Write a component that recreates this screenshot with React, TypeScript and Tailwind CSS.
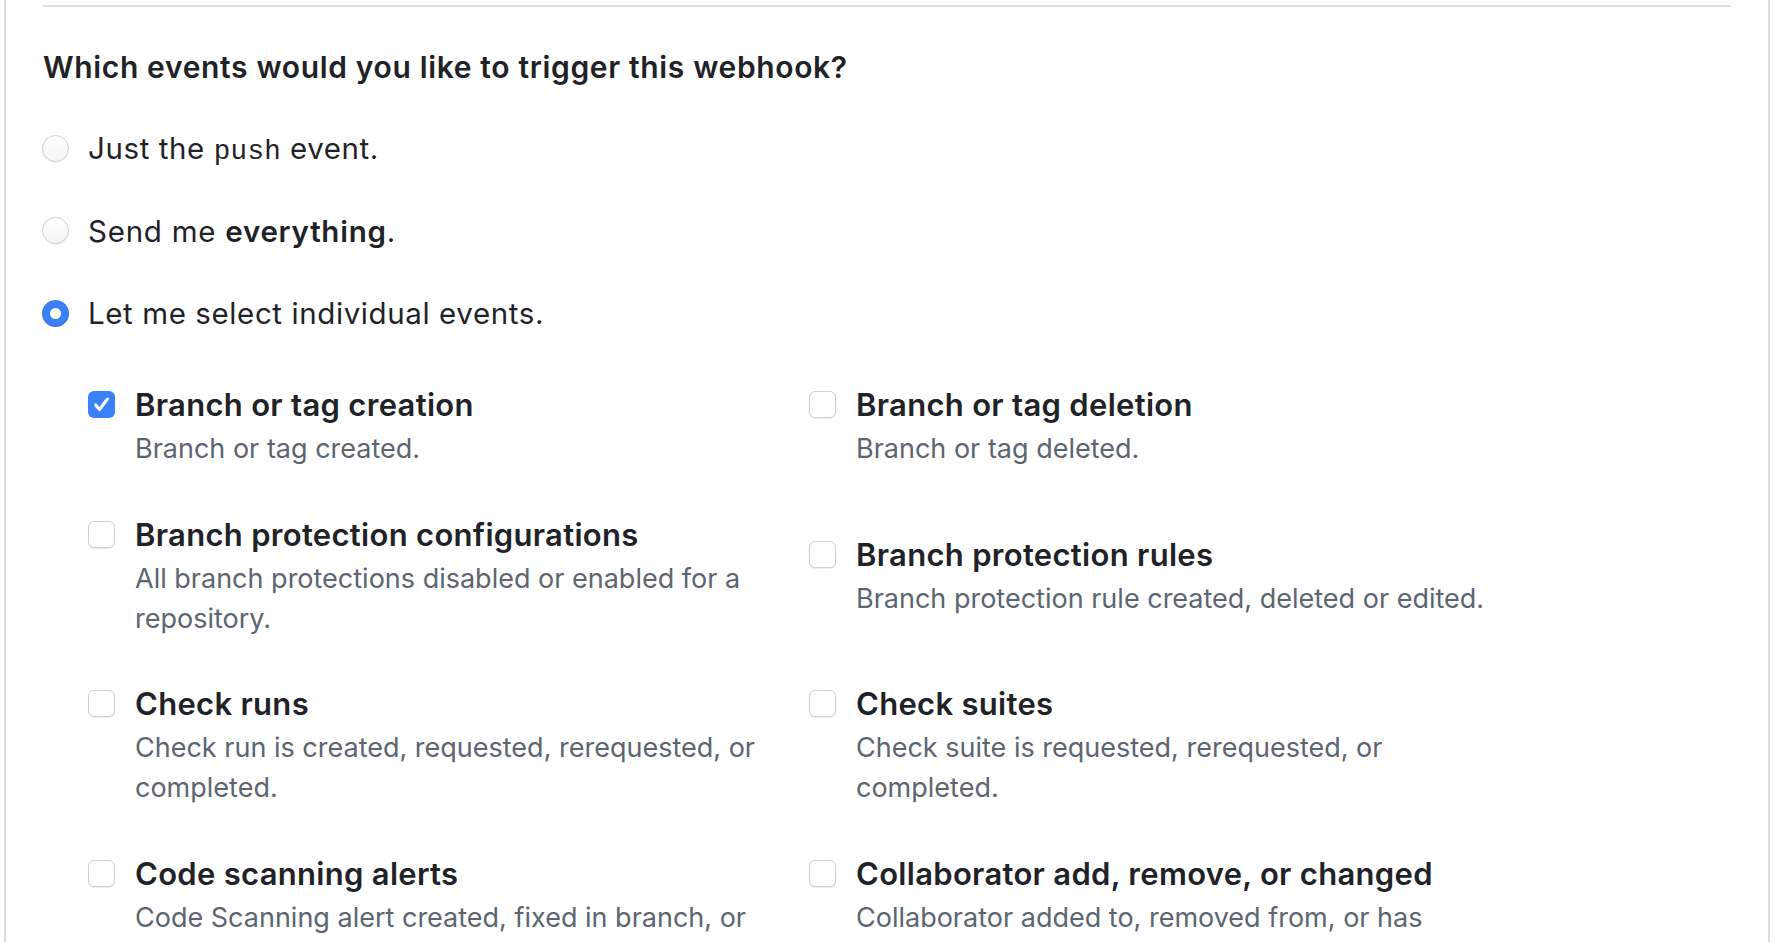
import React from "react";

type Hook = { title: string; desc: string; checked?: boolean };

const events: Hook[] = [
  { title: "Branch or tag creation", desc: "Branch or tag created.", checked: true },
  { title: "Branch or tag deletion", desc: "Branch or tag deleted." },
  {
    title: "Branch protection configurations",
    desc: "All branch protections disabled or enabled for a repository.",
  },
  {
    title: "Branch protection rules",
    desc: "Branch protection rule created, deleted or edited.",
  },
  {
    title: "Check runs",
    desc: "Check run is created, requested, rerequested, or completed.",
  },
  {
    title: "Check suites",
    desc: "Check suite is requested, rerequested, or completed.",
  },
  {
    title: "Code scanning alerts",
    desc: "Code Scanning alert created, fixed in branch, or closed",
  },
  {
    title: "Collaborator add, remove, or changed",
    desc: "Collaborator added to, removed from, or has changed permissions",
  },
];

function Radio({ checked }: { checked?: boolean }) {
  if (checked) {
    return (
      <span className="flex h-[27px] w-[27px] shrink-0 items-center justify-center rounded-full bg-[#3a80f6] shadow-[inset_0_-1px_2px_rgba(0,0,0,0.15)]">
        <span className="h-[11px] w-[11px] rounded-full bg-white" />
      </span>
    );
  }
  return (
    <span className="h-[27px] w-[27px] shrink-0 rounded-full border border-[#cfcfcf] bg-gradient-to-b from-white to-[#f5f5f5] shadow-[0_1px_1px_rgba(0,0,0,0.06)]" />
  );
}

function Checkbox({ checked }: { checked?: boolean }) {
  if (checked) {
    return (
      <span className="mt-[6px] flex h-[27px] w-[27px] shrink-0 items-center justify-center rounded-[6px] bg-[#3a80f6]">
        <svg width="19" height="19" viewBox="0 0 16 16" fill="none">
          <path
            d="M3 8.4 6.3 12.2 13 3.4"
            stroke="white"
            strokeWidth="2.6"
            strokeLinecap="round"
            strokeLinejoin="round"
          />
        </svg>
      </span>
    );
  }
  return (
    <span className="mt-[6px] h-[27px] w-[27px] shrink-0 rounded-[6px] border border-[#cfcfcf] bg-white shadow-[0_1px_1px_rgba(0,0,0,0.07)]" />
  );
}

export default function App() {
  return (
    <div className="h-[942px] w-full overflow-hidden bg-white font-['Inter','Noto_Sans',sans-serif] text-[#1f2328]">
      <div className="ml-[4px] h-full w-[1766px] border-x-2 border-[#d8dde2] px-[37px] pt-[5px]">
        <div className="h-[2px] bg-[#d8dee4]" />

        <h2 className="mt-[40px] text-[30px] font-semibold leading-[40px] tracking-[0.65px]">
          Which events would you like to trigger this webhook?
        </h2>

        <div className="mt-[41px] flex flex-col gap-[42.5px] text-[29.5px] leading-[40px] tracking-[0.6px]">
          <label className="-ml-px flex h-[40px] items-center gap-[19px]">
            <Radio />
            <span className="pt-[3px]">
              Just the{" "}
              <span className="font-['Liberation_Mono',monospace] text-[27.5px] tracking-[0.3px]">push</span>{" "}
              event.
            </span>
          </label>
          <label className="-ml-px flex h-[40px] items-center gap-[19px]">
            <Radio />
            <span className="tracking-[0.75px]">
              Send me <b className="font-semibold">everything</b>.
            </span>
          </label>
          <label className="-ml-px flex h-[40px] items-center gap-[19px]">
            <Radio checked />
            <span>Let me select individual events.</span>
          </label>
        </div>

        <div className="ml-[45px] mt-[52px] grid grid-cols-[721px_721px] items-center gap-y-[45.5px]">
          {events.map((e) => (
            <div key={e.title} className="flex items-start gap-[20px]">
              <Checkbox checked={e.checked} />
              <div className="max-w-[655px]">
                <div className="text-[31px] font-semibold leading-[40px] tracking-[0.3px]">{e.title}</div>
                <p className="mt-[4px] text-[27px] leading-[40px] text-[#5c6570]">{e.desc}</p>
              </div>
            </div>
          ))}
        </div>
      </div>
    </div>
  );
}
